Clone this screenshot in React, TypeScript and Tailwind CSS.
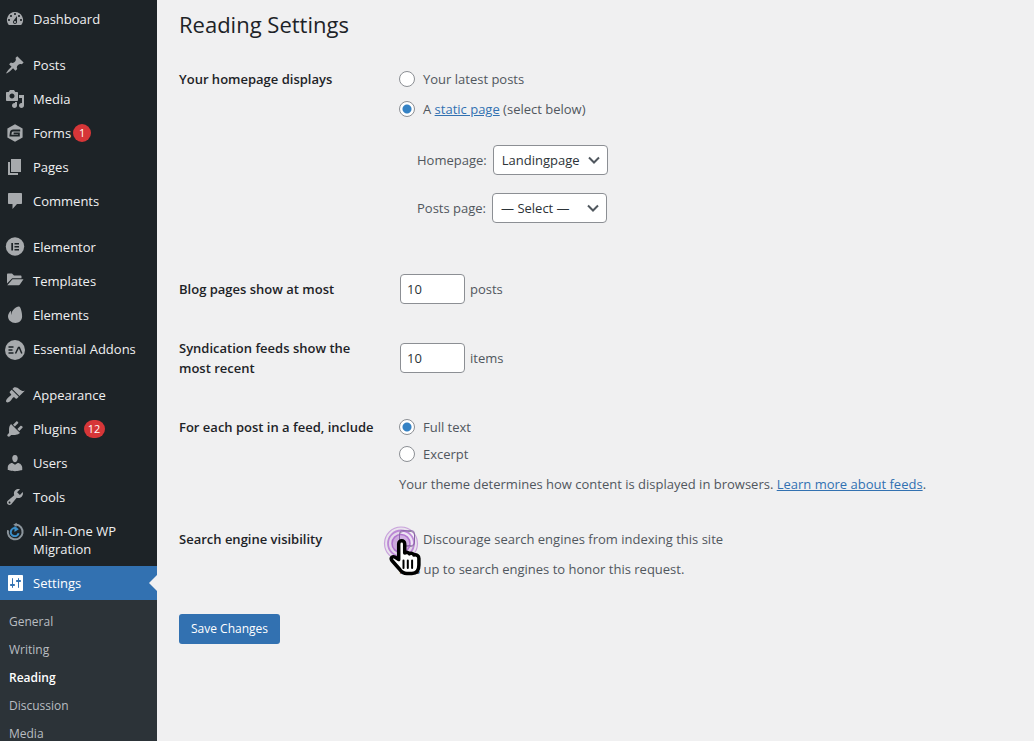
import React from "react";

const icons = {
  dashboard:
    "M3.76 16h12.48A7.998 7.998 0 0 0 10 3a7.998 7.998 0 0 0-6.24 13zM10 4c.55 0 1 .45 1 1s-.45 1-1 1-1-.45-1-1 .45-1 1-1zM6 6c.55 0 1 .45 1 1s-.45 1-1 1-1-.45-1-1 .45-1 1-1zm8 0c.55 0 1 .45 1 1s-.45 1-1 1-1-.45-1-1 .45-1 1-1zm-5.37 5.55L12 7v6c0 1.1-.9 2-2 2s-2-.9-2-2c0-.57.24-1.08.63-1.45zM4 10c.55 0 1 .45 1 1s-.45 1-1 1-1-.45-1-1 .45-1 1-1zm12 0c.55 0 1 .45 1 1s-.45 1-1 1-1-.45-1-1 .45-1 1-1zm-5 3c0-.55-.45-1-1-1s-1 .45-1 1 .45 1 1 1 1-.45 1-1z",
  posts:
    "M10.44 3.02l1.82-1.82 6.36 6.35-1.83 1.82c-1.05-.68-2.48-.57-3.41.36l-.75.75c-.92.93-1.04 2.35-.35 3.41l-1.83 1.82-2.41-2.41-2.8 2.79c-.42.42-3.38 2.71-3.8 2.29s1.86-3.39 2.28-3.81l2.79-2.79L4.1 9.36l1.83-1.82c1.05.69 2.48.57 3.4-.36l.75-.75c.93-.92 1.05-2.35.36-3.41z",
  media:
    "M13 11V4c0-.55-.45-1-1-1h-1.67L9 1H5L3.67 3H2c-.55 0-1 .45-1 1v7c0 .55.45 1 1 1h10c.55 0 1-.45 1-1zM7 4.5c1.38 0 2.5 1.12 2.5 2.5S8.38 9.5 7 9.5 4.5 8.38 4.5 7 5.62 4.5 7 4.5zM14 6h5v10.5c0 1.38-1.12 2.5-2.5 2.5S14 17.88 14 16.5s1.12-2.5 2.5-2.5c.17 0 .34.02.5.05V9h-3V6zm-4 8.05V13h2v3.5c0 1.38-1.12 2.5-2.5 2.5S7 17.88 7 16.5 8.12 14 9.5 14c.17 0 .34.02.5.05z",
  pages: "M6 15V2h10v13H6zm-1 1h8v2H3V5h2v11z",
  comments: "M4 2h12c.6 0 1 .4 1 1v9c0 .6-.4 1-1 1h-4l-4.500 5v-5H4c-.6 0-1-.4-1-1V3c0-.6.4-1 1-1z",
  appearance:
    "M14.48 11.06L7.41 3.99l1.5-1.5c.5-.56 2.3-.47 3.51.32 1.21.8 1.43 1.28 2.91 2.1 1.18.64 2.45 1.26 4.45.85zm-.71.71L6.7 4.7 4.93 6.47c-.39.39-.39 1.02 0 1.41l1.06 1.06c.39.39.39 1.03 0 1.42-.6.6-1.43 1.11-2.21 1.69-.35.26-.7.53-1.01.84C1.43 14.23.4 16.08 1.4 17.07c.99 1 2.84-.03 4.18-1.36.31-.31.58-.66.85-1.02.57-.78 1.08-1.61 1.69-2.21.39-.39 1.02-.39 1.41 0l1.06 1.06c.39.39 1.02.39 1.41 0z",
  plugins:
    "M13.11 4.36L9.87 7.6 8 5.73l3.24-3.24c.35-.34 1.05-.2 1.56.32.52.51.66 1.21.31 1.55zm-8 1.77l.91-1.12 9.01 9.01-1.19.84c-.71.71-2.63 1.16-3.82 1.16H6.14L4.9 17.26c-.59.59-1.54.59-2.12 0-.59-.58-.59-1.53 0-2.12l1.24-1.24v-3.88c0-1.13.4-3.19 1.09-3.89zm7.26 3.97l3.24-3.24c.34-.35 1.04-.21 1.55.31.52.51.66 1.21.31 1.55l-3.24 3.25z",
  users:
    "M10 9.25c-2.27 0-2.73-3.44-2.73-3.44C7 4.02 7.82 2 9.97 2c2.16 0 2.98 2.02 2.71 3.81 0 0-.41 3.44-2.68 3.44zm0 2.57L12.72 10c2.39 0 4.52 2.33 4.52 4.53v2.49s-3.65 1.13-7.24 1.13c-3.65 0-7.24-1.13-7.24-1.13v-2.49c0-2.25 1.94-4.48 4.47-4.48z",
  tools:
    "M16.68 9.77c-1.34 1.34-3.3 1.67-4.95.99l-5.41 6.52c-.99.99-2.59.99-3.58 0s-.99-2.59 0-3.57l6.52-5.42c-.68-1.65-.35-3.61.99-4.95 1.28-1.28 3.12-1.62 4.72-1.06l-2.89 2.89 2.82 2.82 2.86-2.87c.53 1.58.18 3.39-1.08 4.65zM3.81 16.21c.4.39 1.04.39 1.43 0 .4-.4.4-1.04 0-1.43-.39-.4-1.03-.4-1.43 0-.39.39-.39 1.03 0 1.43z",
  settings:
    "M18 17V3c0-.55-.45-1-1-1H4c-.55 0-1 .45-1 1v14c0 .55.45 1 1 1h13c.55 0 1-.45 1-1zM8 11h1c.55 0 1 .45 1 1s-.45 1-1 1H8v1.500c0 .28-.22.5-.5.5s-.5-.22-.5-.5V13H6c-.55 0-1-.45-1-1s.45-1 1-1h1V5.500c0-.28.22-.5.5-.5s.5.22.5.5V11zm5-2h-1c-.55 0-1-.45-1-1s.45-1 1-1h1V5.500c0-.28.22-.5.5-.5s.5.22.5.5V7h1c.55 0 1 .45 1 1s-.45 1-1 1h-1v5.500c0 .28-.22.5-.5.5s-.5-.22-.5-.5V9z",
};

function Glyph({ d }: { d: string }) {
  return (
    <svg viewBox="0 0 20 20" className="size-5 shrink-0" fill="currentColor" fillRule="evenodd" aria-hidden="true">
      <path d={d} />
    </svg>
  );
}

function Drawing({ children }: { children: React.ReactNode }) {
  return (
    <svg viewBox="0 0 20 20" className="size-5 shrink-0 overflow-visible" fill="currentColor" aria-hidden="true">
      {children}
    </svg>
  );
}

const formsIcon = (
  <Drawing>
    <path d="M10 1.200l7.600 4.200v9.200L10 18.800l-7.600-4.200V5.400z" />
    <path d="M15.200 7.500H8.200Q6.200 7.500 5.800 9.500L5.400 12.700H13.900V10.300H8.600" fill="none" stroke="#1d2327" strokeWidth="1.800" />
  </Drawing>
);

const elementorIcon = (
  <Drawing>
    <circle cx="10" cy="9.500" r="9.200" />
    <path d="M6.300 6h1.700v7.500H6.300zM9.500 6H14v1.500H9.500zM9.500 9H14v1.500H9.500zM9.500 12H14v1.500H9.500z" fill="#1d2327" />
  </Drawing>
);

const templatesIcon = (
  <Drawing>
    <path d="M2 3.500c0-.5.4-1 1-1h4l2 2h6.500c.6 0 1 .4 1 1v1.700H7.200L2 12.500z" />
    <path d="M7.500 8.200H18.500l-3.600 5.400c-.3.500-.8.700-1.300.7H2.300z" />
  </Drawing>
);

const elementsIcon = (
  <Drawing>
    <path d="M14.200 1.600c1.600.8 3 6.200 2.900 10.100-.1 3.600-2.900 6.200-6.700 6.200-4.200 0-7.300-2.700-7.400-6.400C3 9.800 4 7.400 5.500 6c.3-.2.700 0 .6.400-.1 1.400-.1 2.500.2 3.600C6.600 4.800 11.500 1.100 14.200 1.600z" />
  </Drawing>
);

const addonsIcon = (
  <Drawing>
    <circle cx="10" cy="11" r="10" />
    <path d="M3.500 8h5M3.500 11h4M3.500 14h5M10.500 14.500l3-6h.8l2.500 6" fill="none" stroke="#1d2327" strokeWidth="1.500" />
  </Drawing>
);

const migrationIcon = (
  <Drawing>
    <path d="M3 8.200A7.400 7.400 0 1 0 11 2.600" fill="none" stroke="#8c959c" strokeWidth="2" />
    <path d="M13.600 11.200A4 4 0 1 1 10.600 6.200" fill="none" stroke="#3b8fca" strokeWidth="2" />
    <path d="M9.600 3.800l4.200 3.500-4.400 2.800z" fill="#3b8fca" />
    <path d="M11.600.800v4L8.200 2.800z" fill="#8c959c" />
  </Drawing>
);

type Item = { label: string; icon: React.ReactNode; badge?: string };

const groups: Item[][] = [
  [{ label: "Dashboard", icon: <Glyph d={icons.dashboard} /> }],
  [
    { label: "Posts", icon: <Glyph d={icons.posts} /> },
    { label: "Media", icon: <Glyph d={icons.media} /> },
    { label: "Forms", icon: formsIcon, badge: "1" },
    { label: "Pages", icon: <Glyph d={icons.pages} /> },
    { label: "Comments", icon: <Glyph d={icons.comments} /> },
  ],
  [
    { label: "Elementor", icon: elementorIcon },
    { label: "Templates", icon: templatesIcon },
    { label: "Elements", icon: elementsIcon },
    { label: "Essential Addons", icon: addonsIcon },
  ],
  [
    { label: "Appearance", icon: <Glyph d={icons.appearance} /> },
    { label: "Plugins", icon: <Glyph d={icons.plugins} />, badge: "12" },
    { label: "Users", icon: <Glyph d={icons.users} /> },
    { label: "Tools", icon: <Glyph d={icons.tools} /> },
  ],
];

function Sidebar() {
  return (
    <nav aria-label="Main menu" className="flex w-[157px] shrink-0 flex-col bg-[#1d2327] pt-0.5 text-[13px] leading-[18px] text-[#f0f0f1]">
      <div className="flex shrink-0 flex-col gap-3">
        {groups.map((group) => (
          <ul key={group[0].label}>
            {group.map((item) => (
              <li key={item.label}>
                <a href="#" className="flex h-[34px] items-center gap-2 pl-[5px] whitespace-nowrap">
                  <span className="text-[#a7aaad]">{item.icon}</span>
                  <span>{item.label}</span>
                  {item.badge === "1" && (
                    <span className="-ml-1.5 size-[18px] rounded-full bg-[#d63638] text-center text-[11px] text-white">1</span>
                  )}
                  {item.badge === "12" && (
                    <span className="-ml-px h-[18px] w-[21px] rounded-full bg-[#d63638] text-center text-[11px] text-white">12</span>
                  )}
                </a>
              </li>
            ))}
          </ul>
        ))}
      </div>
      <a href="#" className="flex shrink-0 gap-2 py-2 pr-2 pl-[5px]">
        {migrationIcon}
        <span>All-in-One WP Migration</span>
      </a>
      <a href="#" className="flex h-[34px] shrink-0 items-center gap-2 bg-[#3271b1] pl-[5px] text-white">
        <Glyph d={icons.settings} />
        <span className="grow">Settings</span>
        <svg viewBox="0 0 8 16" className="h-4 w-2" fill="#f0f0f1" aria-hidden="true">
          <path d="M8 0v16L0 8z" />
        </svg>
      </a>
      <ul className="shrink-0 grow bg-[#2c3338] pt-2 text-[12px] text-[#b9bdc1]">
        {["General", "Writing", "Reading", "Discussion", "Media"].map((label) => (
          <li key={label}>
            <a href="#" className={label === "Reading" ? "flex h-7 items-center pl-[9px] font-semibold text-white" : "flex h-7 items-center pl-[9px]"}>
              {label}
            </a>
          </li>
        ))}
      </ul>
    </nav>
  );
}

const radioClass =
  "size-4 shrink-0 appearance-none rounded-full border border-[#8c8f94] bg-white checked:bg-[radial-gradient(circle,#3582c4_0_4px,#fff_5px)]";
const fieldClass = "h-[30px] rounded border border-[#8c8f94] bg-white text-[#2c3338]";
const linkClass = "text-[#3271b1] underline";

function Row({ title, className, children }: { title: string; className: string; children: React.ReactNode }) {
  return (
    <div role="group" aria-label={title} className={`flex ${className}`}>
      <div className="w-[220px] shrink-0 pr-5 font-semibold text-[#1d2327]">{title}</div>
      <div className="min-w-0 grow">{children}</div>
    </div>
  );
}

function Select({ id, label, options }: { id: string; label: string; options: string[] }) {
  return (
    <div className="flex items-center gap-1.5">
      <label htmlFor={id}>{label}</label>
      <div className="grid items-center">
        <select id={id} className={`${fieldClass} col-start-1 row-start-1 w-[115px] appearance-none pl-2`}>
          {options.map((o) => (
            <option key={o}>{o}</option>
          ))}
        </select>
        <svg viewBox="0 0 12 12" className="pointer-events-none col-start-1 row-start-1 mr-2 size-3 justify-self-end" fill="none" stroke="#50575e" strokeWidth="2" aria-hidden="true">
          <path d="M1 3.500l5 5 5-5" />
        </svg>
      </div>
    </div>
  );
}

function Pointer() {
  return (
    <svg viewBox="0 0 40 56" className="pointer-events-none absolute -top-2 -left-4 h-14 w-10" aria-hidden="true">
      <g fill="#b073cf" fillOpacity=".1" stroke="#b073cf">
        <circle cx="18" cy="22.500" r="16.500" strokeOpacity=".6" strokeWidth="1.200" />
        <circle cx="18" cy="22.500" r="13" strokeOpacity=".8" strokeWidth="1.800" />
        <circle cx="18" cy="22.500" r="9" fillOpacity=".45" strokeWidth="1.500" />
      </g>
      <rect x="16.500" y="9.500" width="15" height="15" rx="3" fill="none" stroke="#7d5a9c" strokeOpacity=".7" />
      <path
        d="M15.700 38.500V23c0-4.200 6-4.200 6 0v9c1.500-1 4-.6 4.700.8 1.500-1 4-.5 4.500 1.200 2.700-.6 5 .6 5 3.500v6.500c0 5.500-2.500 8.500-7 8.500h-5c-3.500 0-5.500-1.500-7.500-4.500l-7.500-8.500c-1.800-2.500.7-4.800 3.300-3.300z"
        fill="#fff"
        stroke="#000"
        strokeWidth="3.500"
        strokeLinejoin="round"
      />
      <path d="M20.500 39.500v7.500M24.800 39.500v7.500M29.100 39.500v7.500" stroke="#000" strokeWidth="2" strokeLinecap="round" />
    </svg>
  );
}

export default function App() {
  return (
    <div className="flex h-screen overflow-hidden bg-[#f0f0f1] font-['Open_Sans','Noto_Sans',sans-serif] text-[13px] leading-5 text-[#50575e]">
      <Sidebar />
      <main className="min-w-0 grow px-[22px] pt-[9px]">
        <h1 className="text-[22px] leading-[30px] text-[#1d2327]">Reading Settings</h1>
        <form onSubmit={(e) => e.preventDefault()}>
          <Row title="Your homepage displays" className="pt-[30px]">
            <label className="flex items-center gap-2">
              <input type="radio" name="front" className={radioClass} />
              Your latest posts
            </label>
            <div className="flex items-center gap-2 pt-[10px]">
              <input id="static" type="radio" name="front" defaultChecked className={radioClass} />
              <label htmlFor="static">
                A <a href="#" className={linkClass}>static page</a> (select below)
              </label>
            </div>
            <div className="flex flex-col gap-[18px] pt-[26px] pl-[18px]">
              <Select id="home" label="Homepage:" options={["Landingpage"]} />
              <Select id="posts" label="Posts page:" options={["— Select —"]} />
            </div>
          </Row>
          <Row title="Blog pages show at most" className="items-center pt-[51px]">
            <label className="flex items-center gap-[5px] pl-px">
              <input type="text" defaultValue="10" className={`${fieldClass} w-[65px] px-1.5`} />
              posts
            </label>
          </Row>
          <Row title="Syndication feeds show the most recent" className="items-center pt-[34px]">
            <label className="flex items-center gap-[5px] pl-px">
              <input type="text" defaultValue="10" className={`${fieldClass} w-[65px] px-1.5`} />
              items
            </label>
          </Row>
          <Row title="For each post in a feed, include" className="pt-[39px]">
            <label className="flex items-center gap-2">
              <input type="radio" name="feed" defaultChecked className={radioClass} />
              Full text
            </label>
            <label className="flex items-center gap-2 pt-[7px]">
              <input type="radio" name="feed" className={radioClass} />
              Excerpt
            </label>
            <p className="pt-[10px]">
              Your theme determines how content is displayed in browsers.{" "}
              <a href="#" className={linkClass}>Learn more about feeds</a>.
            </p>
          </Row>
          <Row title="Search engine visibility" className="pt-[35px]">
            <div className="relative">
              <label className="flex items-center gap-2">
                <input type="checkbox" className="size-4 shrink-0 appearance-none rounded border border-[#8c8f94] bg-white" />
                Discourage search engines from indexing this site
              </label>
              <p className="pt-[10px]">It is up to search engines to honor this request.</p>
              <Pointer />
            </div>
          </Row>
          <button type="submit" className="mt-[35px] h-[30px] w-[101px] rounded-[3px] bg-[#3271b1] text-[12px] text-white">
            Save Changes
          </button>
        </form>
      </main>
    </div>
  );
}
